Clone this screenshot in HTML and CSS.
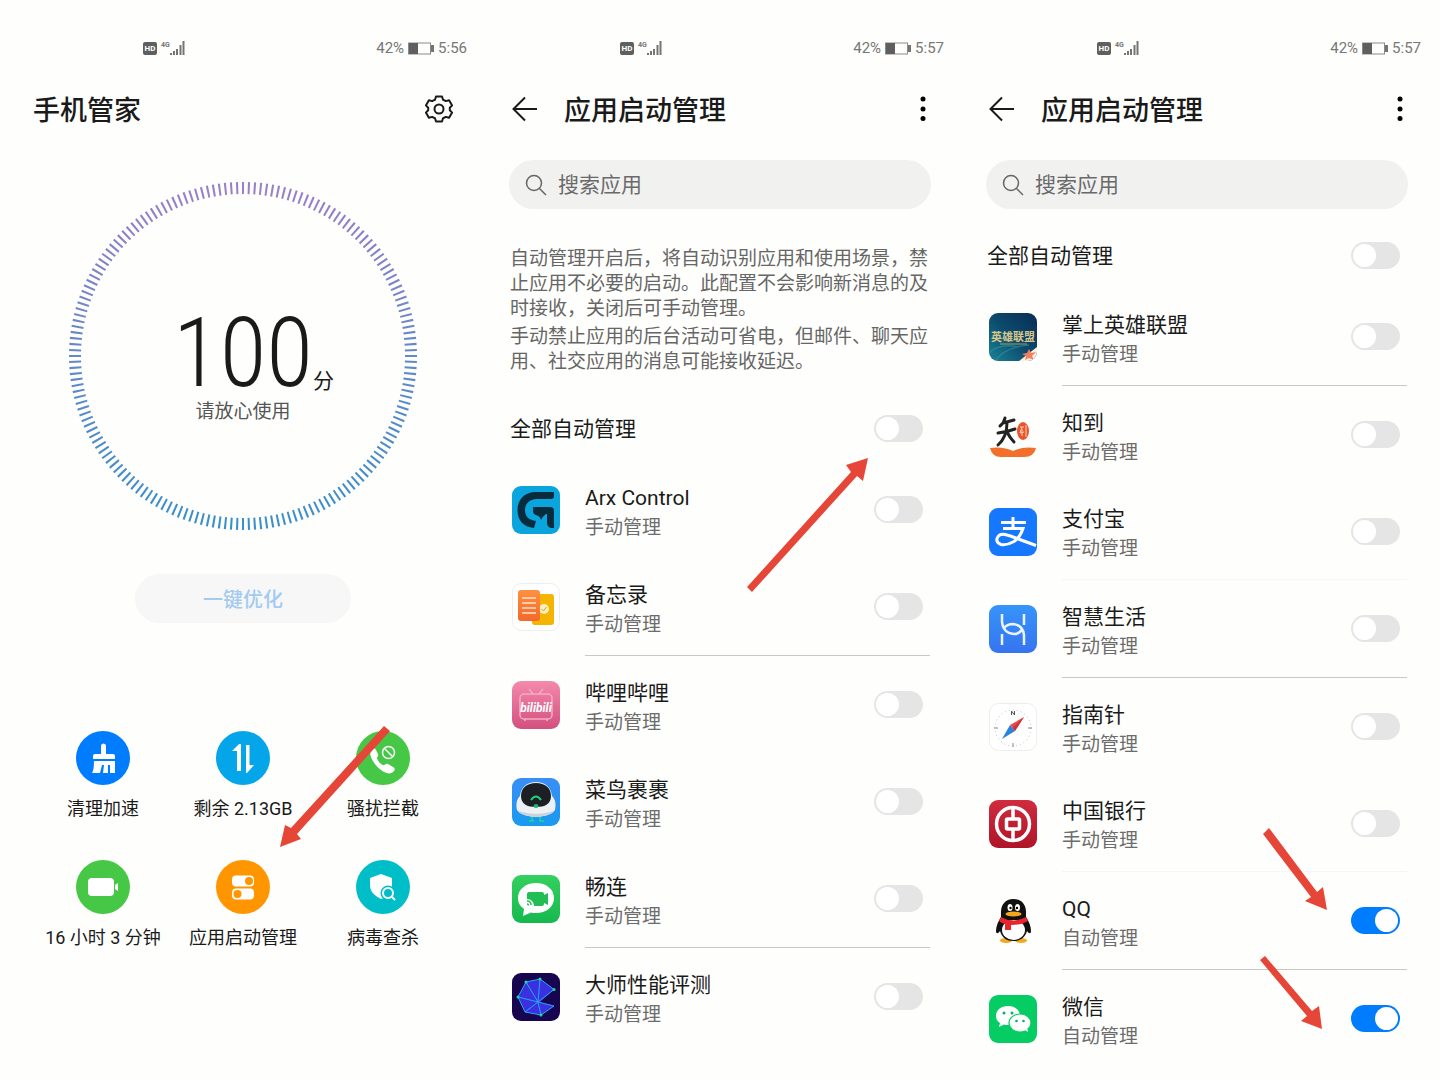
FILE: index.html
```html
<!DOCTYPE html>
<html lang="zh-CN">
<head>
    <meta charset="UTF-8">
    <meta name="viewport" content="width=device-width, initial-scale=1.0">
    <title>手机管家</title>
    <link rel="stylesheet" href="styles.css">
</head>
<body>
    <!-- shared symbols -->
    <svg class="sprite" aria-hidden="true">
        <symbol id="signal" viewBox="0 0 15 14">
            <path d="M1 14v-2M4 14v-4M7 14V8M10.500 14V4M13.500 14V0" stroke="#747474" stroke-width="2" fill="none"/>
        </symbol>
        <symbol id="battery" viewBox="0 0 26 13">
            <rect x="0.500" y="1" width="22" height="11" fill="none" stroke="#8a8a8a"/>
            <rect x="1" y="1" width="9" height="11" fill="#5f5f5f"/>
            <rect x="23" y="3" width="3" height="7" fill="#747474"/>
        </symbol>
        <symbol id="back" viewBox="0 0 26 26">
            <path d="M25 13H2M13 1.500L1.500 13 13 24.500" fill="none" stroke="#1a1a1a" stroke-width="2"/>
        </symbol>
        <symbol id="more" viewBox="0 0 6 26">
            <circle cx="3" cy="3" r="2.500"/><circle cx="3" cy="13" r="2.500"/><circle cx="3" cy="22.500" r="2.500"/>
        </symbol>
        <symbol id="search" viewBox="0 0 22 22">
            <circle cx="9" cy="9" r="7.500" fill="none" stroke="#666" stroke-width="1.500"/>
            <path d="M14.500 14.500L21 21" stroke="#666" stroke-width="1.500"/>
        </symbol>
    </svg>

    <main class="screens">
        <section class="screen">
            <div class="status">
                <div class="status-group">
                    <span class="hd">HD</span>
                    <span class="net">4G</span>
                    <svg class="signal"><use href="#signal"/></svg>
                </div>
                <div class="status-group">
                    <span>42%</span>
                    <svg class="battery"><use href="#battery"/></svg>
                    <span>5:56</span>
                </div>
            </div>
            <header class="header">
                <h1 class="title">手机管家</h1>
                <button class="icon-btn header-end" aria-label="设置">
                    <svg width="28" height="28" viewBox="0 0 28 28" fill="none" stroke="#1a1a1a" stroke-width="2" stroke-linejoin="round">
                        <path d="M11 1.500h6l1 3.200q1.500.5 2.800 1.400l3.300-.9 3 5.200-2.300 2.400v2.400l2.300 2.400-3 5.200-3.300-.9q-1.300.9-2.800 1.400l-1 3.200h-6l-1-3.200q-1.500-.5-2.800-1.400l-3.300.9-3-5.200 2.300-2.400v-2.400L.9 10.400l3-5.200 3.300.9Q8.500 5.200 10 4.700z"/>
                        <circle cx="14" cy="14" r="4.500"/>
                    </svg>
                </button>
            </header>

            <div class="dial">
                <svg class="dial-ring" viewBox="0 0 348 348">
                    <defs>
                        <linearGradient id="ring" x1="0" y1="0" x2="0" y2="1">
                            <stop offset="0" stop-color="#9a80c8"/>
                            <stop offset="0.500" stop-color="#6488c8"/>
                            <stop offset="1" stop-color="#3a90cc"/>
                        </linearGradient>
                    </defs>
                    <circle cx="174" cy="174" r="168" fill="none" stroke="url(#ring)" stroke-width="12" pathLength="360" stroke-dasharray="0.700 1.300" stroke-dashoffset="0.350"/>
                </svg>
                <div class="dial-text">
                    <p class="score">100<span class="score-unit">分</span></p>
                    <p class="dial-note">请放心使用</p>
                </div>
            </div>

            <button class="optimize">一键优化</button>

            <nav class="tools">
                <a class="tool" href="#">
                    <svg class="tool-icon" viewBox="0 0 54 54">
                        <circle cx="27" cy="27" r="27" fill="#007dff"/>
                        <path d="M25 14q2.500-3 5 0v9h7q2 0 2 2v3H17v-3q0-2 2-2h6z" fill="#fff"/>
                        <path d="M18 30h21v12h-5v-8h-2v8h-5l1-8h-2l-2 8h-8q2-3 2-12z" fill="#fff"/>
                    </svg>
                    <span>清理加速</span>
                </a>
                <a class="tool" href="#">
                    <svg class="tool-icon" viewBox="0 0 54 54">
                        <circle cx="27" cy="27" r="27" fill="#05a5ea"/>
                        <path d="M16 20l7-7h2v27h-4V20zM30 14h3.500v20H38l-7 8h-1z" fill="#fff"/>
                    </svg>
                    <span>剩余 2.13GB</span>
                </a>
                <a class="tool" href="#">
                    <svg class="tool-icon" viewBox="0 0 54 54">
                        <circle cx="27" cy="27" r="27" fill="#46c846"/>
                        <path d="M14 20c2-3 5-3 6-1l2 4c1 2-1 3-1 4 1 3 3 6 6 7 2 1 2-2 5-1l5 3c2 1 2 2 1 4-2 3-6 3-10 1-7-4-14-12-14-21z" fill="#fff"/>
                        <g fill="none" stroke="#fff" stroke-width="1.500"><circle cx="32.500" cy="21.500" r="6"/><path d="M28.500 17.500l8 8"/></g>
                    </svg>
                    <span>骚扰拦截</span>
                </a>
                <a class="tool" href="#">
                    <svg class="tool-icon" viewBox="0 0 54 54">
                        <circle cx="27" cy="27" r="27" fill="#46c846"/>
                        <rect x="12" y="18" width="26" height="18" rx="4" fill="#fff"/>
                        <path d="M39 25l3-2v8l-3-2z" fill="#fff"/>
                    </svg>
                    <span>16 小时 3 分钟</span>
                </a>
                <a class="tool" href="#">
                    <svg class="tool-icon" viewBox="0 0 54 54">
                        <circle cx="27" cy="27" r="27" fill="#ff9600"/>
                        <rect x="16" y="15.500" width="22" height="11" rx="4" fill="#fff"/>
                        <rect x="16" y="28.500" width="22" height="11" rx="4" fill="#fff"/>
                        <g fill="#ff9600"><circle cx="33" cy="21" r="4"/><circle cx="21.500" cy="34" r="4"/></g>
                    </svg>
                    <span>应用启动管理</span>
                </a>
                <a class="tool" href="#">
                    <svg class="tool-icon" viewBox="0 0 54 54">
                        <circle cx="27" cy="27" r="27" fill="#00bec8"/>
                        <path d="M25 14l11 4v9c0 6-5 10-11 12-6-3-11-7-11-14v-7z" fill="#fff"/>
                        <circle cx="32" cy="33" r="7.500" fill="#00bec8"/>
                        <g fill="none" stroke="#fff" stroke-width="2"><circle cx="32" cy="33" r="5"/><path d="M36 37l3 3"/></g>
                    </svg>
                    <span>病毒查杀</span>
                </a>
            </nav>

            <svg class="arrow arrow-tools" width="110" height="122" viewBox="280 726 110 122">
                <path d="M384 726l6 5-93 103 4 5-21 8 5-22 6 3z"/>
            </svg>
        </section>

        <section class="screen">
            <div class="status">
                <div class="status-group">
                    <span class="hd">HD</span>
                    <span class="net">4G</span>
                    <svg class="signal"><use href="#signal"/></svg>
                </div>
                <div class="status-group">
                    <span>42%</span>
                    <svg class="battery"><use href="#battery"/></svg>
                    <span>5:57</span>
                </div>
            </div>
            <header class="header">
                <button class="icon-btn back-btn" aria-label="返回"><svg width="26" height="26"><use href="#back"/></svg></button>
                <h2 class="title">应用启动管理</h2>
                <button class="icon-btn header-end more-btn" aria-label="更多"><svg width="6" height="26"><use href="#more"/></svg></button>
            </header>
            <label class="search">
                <svg width="22" height="22"><use href="#search"/></svg>
                <input class="search-input" type="text" placeholder="搜索应用" aria-label="搜索应用">
            </label>

            <div class="intro">
                <p>自动管理开启后，将自动识别应用和使用场景，禁止应用不必要的启动。此配置不会影响新消息的及时接收，关闭后可手动管理。</p>
                <p>手动禁止应用的后台活动可省电，但邮件、聊天应用、社交应用的消息可能接收延迟。</p>
            </div>

            <div class="master">
                <label class="master-label" for="all-a">全部自动管理</label>
                <input class="switch" type="checkbox" id="all-a">
            </div>

            <ul class="apps">
                <li class="app">
                    <svg class="app-icon" viewBox="0 0 48 48">
                        <rect width="48" height="48" rx="9" fill="#0aa5dc"/>
                        <path d="M42 6v4q0 3-3 3H25c-8 0-12 5-12 11 0 7 4 10 11 11l-2 7C11 41 5.500 34 5.500 24S12 6 24 6z" fill="#062c3e"/>
                        <path d="M21 21h17q4 0 4 4v17h-3q-4-1-4-5v-9h-1q-3 2-5 6-1-4-5-5-3-1-3-4z" fill="#062c3e"/>
                    </svg>
                    <div class="app-body">
                        <label class="app-text" for="arx"><span class="app-name">Arx Control</span><span class="app-mode">手动管理</span></label>
                        <input class="switch" type="checkbox" id="arx">
                    </div>
                </li>
                <li class="app">
                    <svg class="app-icon" viewBox="0 0 48 48">
                        <defs><linearGradient id="memo" x1="0" y1="0" x2="0" y2="1"><stop offset="0" stop-color="#ff9040"/><stop offset="1" stop-color="#f4682c"/></linearGradient></defs>
                        <rect x="0.500" y="0.500" width="47" height="47" rx="9" fill="#fff" stroke="#eee"/>
                        <rect x="20" y="11" width="22" height="31" rx="3" fill="#f5b400"/>
                        <circle cx="32" cy="26" r="5" fill="#ffeec0"/>
                        <path d="M29.500 26l2 2 3-4" fill="none" stroke="#e0a000"/>
                        <rect x="6" y="7" width="22" height="31" rx="3" fill="url(#memo)"/>
                        <path d="M10 15h14M10 20h14M10 25h14M10 30h14" stroke="#ffe2cc" stroke-width="1.500"/>
                    </svg>
                    <div class="app-body divided">
                        <label class="app-text" for="memo-sw"><span class="app-name">备忘录</span><span class="app-mode">手动管理</span></label>
                        <input class="switch" type="checkbox" id="memo-sw">
                    </div>
                </li>
                <li class="app">
                    <svg class="app-icon" viewBox="0 0 48 48">
                        <defs><linearGradient id="bili" x1="0" y1="0" x2="0" y2="1"><stop offset="0" stop-color="#f48aac"/><stop offset="1" stop-color="#d2507e"/></linearGradient></defs>
                        <rect width="48" height="48" rx="9" fill="url(#bili)"/>
                        <g fill="none" stroke="#f6acc4" stroke-width="1.500"><rect x="8" y="13" width="32" height="25" rx="4"/><path d="M17 8l4 5M31 8l-4 5M13 38v2M35 38v2"/></g>
                        <text class="bili-text" x="24" y="31" text-anchor="middle">bilibili</text>
                    </svg>
                    <div class="app-body">
                        <label class="app-text" for="bili-sw"><span class="app-name">哔哩哔哩</span><span class="app-mode">手动管理</span></label>
                        <input class="switch" type="checkbox" id="bili-sw">
                    </div>
                </li>
                <li class="app">
                    <svg class="app-icon" viewBox="0 0 48 48">
                        <defs><linearGradient id="bird" x1="0" y1="0" x2="0" y2="1"><stop offset="0" stop-color="#3a8ef6"/><stop offset="1" stop-color="#189af0"/></linearGradient></defs>
                        <rect width="48" height="48" rx="9" fill="url(#bird)"/>
                        <path d="M20 38v6M28 38v6M17 43h5M27 43h5" stroke="#16cca0" stroke-width="2"/>
                        <path d="M24 4c9 0 15 5 16 14 4 4 4 9 3 14-5 9-33 9-38 0-1-5-1-10 3-14C9 9 15 4 24 4z" fill="#eef1f4"/>
                        <path d="M6 32c7 5 29 5 36 0-3 9-33 9-36 0z" fill="#ccd2da"/>
                        <path d="M24 5c9 0 15 5 15 13s-6 11-15 11S9 26 9 18 15 5 24 5z" fill="#1c2024"/>
                        <path d="M19 22q5-7 10 0" fill="none" stroke="#1bd47c" stroke-width="2"/>
                        <ellipse cx="24" cy="28" rx="2.500" ry="2" fill="#1bb36c"/>
                    </svg>
                    <div class="app-body">
                        <label class="app-text" for="cainiao"><span class="app-name">菜鸟裹裹</span><span class="app-mode">手动管理</span></label>
                        <input class="switch" type="checkbox" id="cainiao">
                    </div>
                </li>
                <li class="app">
                    <svg class="app-icon" viewBox="0 0 48 48">
                        <defs><linearGradient id="meet" x1="0" y1="0" x2="0" y2="1"><stop offset="0" stop-color="#34d060"/><stop offset="1" stop-color="#16b84e"/></linearGradient></defs>
                        <rect width="48" height="48" rx="9" fill="url(#meet)"/>
                        <path d="M24 8c10 0 18 6 18 15s-8 15-18 15q-3 0-5-.500L11 41l1-7c-4-3-6-6-6-11C6 14 14 8 24 8z" fill="#fff"/>
                        <path d="M17 17h13q2 0 2 2v1l4-2v12l-4-2v1q0 2-2 2H22c0-4-3-7-7-7v-5q0-2 2-2z" fill="#23bd55"/>
                        <path d="M15 26q4 0 4 4M15 29q1.500 0 1.500 1.500" fill="none" stroke="#23bd55" stroke-width="1.500"/>
                    </svg>
                    <div class="app-body divided">
                        <label class="app-text" for="meet-sw"><span class="app-name">畅连</span><span class="app-mode">手动管理</span></label>
                        <input class="switch" type="checkbox" id="meet-sw">
                    </div>
                </li>
                <li class="app">
                    <svg class="app-icon" viewBox="0 0 48 48">
                        <rect width="48" height="48" rx="9" fill="#17064f"/>
                        <path d="M28 6L14 9 6 24l7 15 16 3 13-9-14-4 14-12.500z" fill="#3a30e0"/>
                        <path d="M28 6L14 9 6 24l7 15 16 3 13-9-16-4 16-12.500zM28 6l-2 23M14 9l12 20M6 24l20 5-13 10M26 29l3 13" fill="none" stroke="#23a8f4" stroke-linejoin="round"/>
                        <g fill="#22d8a0"><circle cx="28" cy="6" r="1.500"/><circle cx="14" cy="9" r="1.500"/><circle cx="6" cy="24" r="1.500"/><circle cx="29" cy="42" r="1.500"/><circle cx="42" cy="16.500" r="1.500"/></g>
                    </svg>
                    <div class="app-body">
                        <label class="app-text" for="master-lu"><span class="app-name">大师性能评测</span><span class="app-mode">手动管理</span></label>
                        <input class="switch" type="checkbox" id="master-lu">
                    </div>
                </li>
            </ul>

            <svg class="arrow arrow-master" width="122" height="134" viewBox="746 458 122 134">
                <path d="M747 587l104-115-5-7 22-7-5 23-6-5-105 116z"/>
            </svg>
        </section>

        <section class="screen">
            <div class="status">
                <div class="status-group">
                    <span class="hd">HD</span>
                    <span class="net">4G</span>
                    <svg class="signal"><use href="#signal"/></svg>
                </div>
                <div class="status-group">
                    <span>42%</span>
                    <svg class="battery"><use href="#battery"/></svg>
                    <span>5:57</span>
                </div>
            </div>
            <header class="header">
                <button class="icon-btn back-btn" aria-label="返回"><svg width="26" height="26"><use href="#back"/></svg></button>
                <h2 class="title">应用启动管理</h2>
                <button class="icon-btn header-end more-btn" aria-label="更多"><svg width="6" height="26"><use href="#more"/></svg></button>
            </header>
            <label class="search">
                <svg width="22" height="22"><use href="#search"/></svg>
                <input class="search-input" type="text" placeholder="搜索应用" aria-label="搜索应用">
            </label>

            <div class="master master-top">
                <label class="master-label" for="all-b">全部自动管理</label>
                <input class="switch" type="checkbox" id="all-b">
            </div>

            <ul class="apps">
                <li class="app">
                    <svg class="app-icon" viewBox="0 0 48 48">
                        <defs>
                            <linearGradient id="lol" x1="0" y1="1" x2="1" y2="0"><stop offset="0" stop-color="#1c8296"/><stop offset="0.500" stop-color="#0b4a6c"/><stop offset="1" stop-color="#0a2c54"/></linearGradient>
                            <clipPath id="lol-clip"><rect width="48" height="48" rx="9"/></clipPath>
                        </defs>
                        <g clip-path="url(#lol-clip)">
                            <rect width="48" height="48" fill="url(#lol)"/>
                            <path d="M6 48Q16 34 40 32M0 40Q10 30 30 34" fill="none" stroke="#2a94a4" stroke-width="1.500" opacity="0.600"/>
                            <path d="M48 34v14H30z" fill="#fdeee4"/>
                            <path d="M40 36l2 4 5-1-4 4 2 4-5-2-4 2 1-4-4-2 5-1z" fill="#f08060"/>
                        </g>
                        <text class="lol-text" x="24" y="28" text-anchor="middle">英雄联盟</text>
                        <path d="M11 31h27" stroke="#a99a58"/>
                    </svg>
                    <div class="app-body divided">
                        <label class="app-text" for="lol-sw"><span class="app-name">掌上英雄联盟</span><span class="app-mode">手动管理</span></label>
                        <input class="switch" type="checkbox" id="lol-sw">
                    </div>
                </li>
                <li class="app">
                    <svg class="app-icon" viewBox="0 0 48 48">
                        <path d="M16 7q-1 5-5 8M14 12l11-3M9 22q9-1 17-4M18 12q0 14-9 22M18 21q3 6 7 10" fill="none" stroke="#222" stroke-width="3" stroke-linecap="round"/>
                        <ellipse cx="34" cy="20" rx="6" ry="9" fill="#e8542c"/>
                        <path d="M31 16h4M33 16l-2 6 4-1M37 14v12M33 18v7" fill="none" stroke="#fbd0bc"/>
                        <path d="M1 37q13-2 23 3 10-5 23-3-2 9-12 9H12Q3 46 1 37z" fill="#f3702c"/>
                    </svg>
                    <div class="app-body">
                        <label class="app-text" for="zhidao"><span class="app-name">知到</span><span class="app-mode">手动管理</span></label>
                        <input class="switch" type="checkbox" id="zhidao">
                    </div>
                </li>
                <li class="app">
                    <svg class="app-icon" viewBox="0 0 48 48">
                        <rect width="48" height="48" rx="9" fill="#1677ff"/>
                        <path d="M24 9v10M12 14.500h25M14 20.500h20q-3 9-9 13-7 4-13 3-5-2-4-6 2-5 8-4 5 1 12 4l19 7" fill="none" stroke="#fff" stroke-width="3"/>
                    </svg>
                    <div class="app-body divided faint">
                        <label class="app-text" for="alipay"><span class="app-name">支付宝</span><span class="app-mode">手动管理</span></label>
                        <input class="switch" type="checkbox" id="alipay">
                    </div>
                </li>
                <li class="app">
                    <svg class="app-icon" viewBox="0 0 48 48">
                        <defs><linearGradient id="life" x1="0" y1="0" x2="0" y2="1"><stop offset="0" stop-color="#3694fa"/><stop offset="1" stop-color="#3674f0"/></linearGradient></defs>
                        <rect width="48" height="48" rx="9" fill="url(#life)"/>
                        <path d="M13 9v8q1 11 12 12 6 0 8-5M35 9v11M13 40V29M15 23q3-4 9-4 10 1 11 11v10" fill="none" stroke="#eaf3ff" stroke-width="2.500"/>
                    </svg>
                    <div class="app-body divided">
                        <label class="app-text" for="life-sw"><span class="app-name">智慧生活</span><span class="app-mode">手动管理</span></label>
                        <input class="switch" type="checkbox" id="life-sw">
                    </div>
                </li>
                <li class="app">
                    <svg class="app-icon" viewBox="0 0 48 48">
                        <rect x="0.500" y="0.500" width="47" height="47" rx="9" fill="#fff" stroke="#eee"/>
                        <circle cx="24" cy="25" r="18" fill="none" stroke="#bbb" stroke-dasharray="1 3"/>
                        <path d="M5 25h4M39 25h4M24 40v4" stroke="#888"/>
                        <path d="M22.500 12V8l3 4V8" fill="none" stroke="#555"/>
                        <path d="M35 14L21 22l5 6z" fill="#e84c48"/>
                        <path d="M13 36l8-14 5 6z" fill="#2a84dc"/>
                        <path d="M35 14L23.500 25l2.500 3z" fill="#c83440"/>
                    </svg>
                    <div class="app-body">
                        <label class="app-text" for="compass"><span class="app-name">指南针</span><span class="app-mode">手动管理</span></label>
                        <input class="switch" type="checkbox" id="compass">
                    </div>
                </li>
                <li class="app">
                    <svg class="app-icon" viewBox="0 0 48 48">
                        <defs><linearGradient id="boc" x1="0" y1="0" x2="0" y2="1"><stop offset="0" stop-color="#d02c40"/><stop offset="1" stop-color="#b01428"/></linearGradient></defs>
                        <rect width="48" height="48" rx="9" fill="url(#boc)"/>
                        <g fill="none" stroke="#fff" stroke-width="3.500"><circle cx="24" cy="24" r="16.500"/><rect x="17.500" y="19" width="13" height="10" rx="1"/><path d="M24 8v11M24 29v11"/></g>
                    </svg>
                    <div class="app-body divided faint">
                        <label class="app-text" for="boc-sw"><span class="app-name">中国银行</span><span class="app-mode">手动管理</span></label>
                        <input class="switch" type="checkbox" id="boc-sw">
                    </div>
                </li>
                <li class="app">
                    <svg class="app-icon" viewBox="0 0 48 48">
                        <ellipse cx="17" cy="43.500" rx="6" ry="2.500" fill="#f4a81c"/><ellipse cx="32" cy="43.500" rx="6" ry="2.500" fill="#f4a81c"/>
                        <path d="M24.500 2C33 2 37 8 37 15v5c3 5 5 9 5 14 0 3-2 3-4 0-2 7-7 10-13.500 10S13 41 11 34c-2 3-4 3-4 0 0-5 2-9 5-14v-5C12 8 16 2 24.500 2z" fill="#111"/>
                        <ellipse cx="24.500" cy="33" rx="11.500" ry="10" fill="#fff"/>
                        <ellipse cx="21" cy="10.500" rx="2.500" ry="3.500" fill="#fff"/><ellipse cx="28.500" cy="10.500" rx="2.500" ry="3.500" fill="#fff"/>
                        <circle cx="21.500" cy="11" r="1.200"/><circle cx="28" cy="11" r="1.200"/>
                        <ellipse cx="24.500" cy="17" rx="8" ry="2.500" fill="#f4a81c"/>
                        <path d="M12 20q12 7 25 0l2 4q-6 4-17 4v5h-6v-6q-4-1-6-3z" fill="#e8242c"/>
                    </svg>
                    <div class="app-body divided">
                        <label class="app-text" for="qq"><span class="app-name">QQ</span><span class="app-mode">自动管理</span></label>
                        <input class="switch" type="checkbox" id="qq" checked>
                    </div>
                </li>
                <li class="app">
                    <svg class="app-icon" viewBox="0 0 48 48">
                        <rect width="48" height="48" rx="9" fill="#06cc64"/>
                        <path d="M19 11c7 0 12 4 12 10s-5 9-12 9q-2 0-4-.500L10 32l1-4c-3-2-4-4-4-7 0-6 5-10 12-10z" fill="#fff"/>
                        <path d="M31 19c6 0 11 4 11 9 0 3-1 4-3 6l1 4-4-2q-2 1-5 1c-6 0-11-4-11-9s5-9 11-9z" fill="#fff" stroke="#06cc64" stroke-width="1.200"/>
                        <g fill="#06b45c"><circle cx="15" cy="18" r="1.500"/><circle cx="23" cy="18" r="1.500"/><circle cx="27.500" cy="26" r="1.300"/><circle cx="34.500" cy="26" r="1.300"/></g>
                    </svg>
                    <div class="app-body">
                        <label class="app-text" for="wechat"><span class="app-name">微信</span><span class="app-mode">自动管理</span></label>
                        <input class="switch" type="checkbox" id="wechat" checked>
                    </div>
                </li>
            </ul>

            <svg class="arrow arrow-qq" width="64" height="82" viewBox="1263 828 64 82">
                <path d="M1269 828l48 64 6-5 4 23-22-9 6-4-48-63z"/>
            </svg>
            <svg class="arrow arrow-wechat" width="64" height="74" viewBox="1259 956 64 74">
                <path d="M1265 956l47 55 7-5 3 23-21-8 6-5-47-56z"/>
            </svg>
        </section>
    </main>
</body>
</html>
```

FILE: styles.css
```css
* {
    box-sizing: border-box;
}

body {
    margin: 0;
    background: #fefefc;
    color: #1a1a1a;
    font-family: Roboto, "Noto Sans CJK SC", sans-serif;
}

h1, h2, p, ul {
    margin: 0;
    padding: 0;
}

ul {
    list-style: none;
}

button {
    font-family: inherit;
    border: 0;
    cursor: pointer;
}

svg {
    display: block;
    flex-shrink: 0;
}

.sprite {
    position: absolute;
    width: 0;
    height: 0;
}

.screens {
    display: grid;
    grid-template-columns: repeat(3, minmax(0, 1fr));
    padding-right: 9px;
}

.screen {
    position: relative;
    padding: 20px 24px 12px 33px;
}

/* status bar */
.status {
    display: flex;
    justify-content: space-between;
    align-items: center;
    height: 56px;
    margin-right: -14px;
    padding-left: 110px;
    font-size: 15px;
    color: #777;
}

.status-group {
    display: flex;
    align-items: center;
    gap: 4px;
}

.hd {
    width: 14px;
    height: 13px;
    border-radius: 2px;
    background: #5f5f5f;
    color: #fff;
    font-size: 8px;
    font-weight: 700;
    line-height: 13px;
    text-align: center;
}

.net {
    align-self: flex-start;
    font-size: 7px;
    font-weight: 700;
    line-height: 8px;
}

.signal {
    width: 15px;
    height: 14px;
    margin-left: -4px;
}

.battery {
    width: 26px;
    height: 13px;
}

/* header */
.header {
    display: flex;
    align-items: center;
    height: 66px;
}

.title {
    padding-top: 3px;
    font-size: 27px;
    font-weight: 500;
    line-height: 40px;
}

.icon-btn {
    padding: 0;
    background: none;
}

.back-btn {
    margin: 0 26px 0 2px;
}

.header-end {
    margin-left: auto;
}

.more-btn {
    margin-right: 4px;
}

.search {
    display: flex;
    align-items: center;
    gap: 11px;
    height: 49px;
    margin: 18px -1px 0;
    padding: 0 16px;
    border-radius: 25px;
    background: #f1f1f0;
}

.search-input {
    flex: 1;
    min-width: 0;
    padding: 0;
    border: 0;
    outline: 0;
    background: none;
    font-family: inherit;
    font-size: 21px;
}

.search-input::placeholder {
    color: #6a6a6a;
}

/* score dial */
.dial {
    display: grid;
    place-items: center;
    margin-top: 40px;
}

.dial-ring,
.dial-text {
    grid-area: 1 / 1;
}

.dial-ring {
    width: 348px;
    height: 348px;
}

.dial-text {
    padding-top: 22px;
    text-align: center;
}

.score {
    position: relative;
    font-family: "Roboto Condensed", "Liberation Sans Narrow", Roboto, sans-serif;
    font-size: 96px;
    font-weight: 300;
    line-height: 90px;
}

.score-unit {
    position: absolute;
    left: 100%;
    bottom: 4px;
    font-family: "Noto Sans CJK SC", sans-serif;
    font-size: 21px;
    font-weight: 400;
    line-height: 30px;
}

.dial-note {
    color: #555;
    font-size: 19px;
    line-height: 28px;
}

.optimize {
    display: block;
    width: 216px;
    height: 49px;
    margin: 44px auto 0;
    border-radius: 25px;
    background: #f7f7f7;
    color: #a3cbf1;
    font-size: 20px;
    font-weight: 500;
}

.tools {
    display: grid;
    grid-template-columns: repeat(3, 1fr);
    row-gap: 39px;
    margin-top: 108px;
}

.tool {
    display: flex;
    flex-direction: column;
    align-items: center;
    gap: 12px;
    color: #1a1a1a;
    font-size: 18px;
    line-height: 24px;
    text-decoration: none;
    white-space: nowrap;
}

.tool-icon {
    width: 54px;
    height: 54px;
}

/* app list */
.intro {
    margin: 37px 0 21px;
    color: #666;
    font-size: 19px;
    line-height: 25px;
}

.intro p + p {
    margin-top: 3px;
}

.master {
    display: flex;
    justify-content: space-between;
    align-items: center;
    height: 66px;
    padding-right: 7px;
    font-size: 21px;
}

.master-label {
    padding-bottom: 3px;
}

.master-top {
    margin-top: 13px;
}

.app {
    display: flex;
    align-items: center;
    gap: 25px;
    padding-left: 2px;
}

.app-icon {
    width: 48px;
    height: 48px;
}

.bili-text {
    fill: #fff;
    font-size: 12px;
    font-style: italic;
    font-weight: 700;
}

.lol-text {
    fill: #d9c68a;
    font-size: 11px;
    font-weight: 700;
}

.app-body {
    display: flex;
    flex: 1;
    justify-content: space-between;
    align-items: center;
    min-height: 97px;
    padding-right: 7px;
}

.divided {
    min-height: 98px;
    border-bottom: 1px solid #c8c8c8;
}

.faint {
    min-height: 97px;
    border-color: #f5f5f4;
}

.app-text {
    display: flex;
    flex-direction: column;
    padding-top: 6px;
    line-height: 30px;
}

.app-name {
    font-size: 21px;
}

.app-mode {
    color: #6c6c6c;
    font-size: 19px;
}

.switch {
    appearance: none;
    display: flex;
    align-items: center;
    flex-shrink: 0;
    width: 49px;
    height: 27px;
    margin: 0;
    padding: 0 2px;
    border-radius: 14px;
    background: #e5e5e5;
    cursor: pointer;
}

.switch::before {
    content: "";
    width: 23px;
    height: 23px;
    border-radius: 50%;
    background: #fff;
}

.switch:checked {
    justify-content: flex-end;
    background: #007dff;
}

/* red pointers drawn over the screens */
.arrow {
    position: absolute;
    fill: #e64638;
    pointer-events: none;
}

.arrow-tools {
    left: 280px;
    top: 726px;
}

.arrow-master {
    right: 86px;
    top: 458px;
}

.arrow-qq {
    right: 104px;
    top: 828px;
}

.arrow-wechat {
    right: 108px;
    top: 956px;
}
```
